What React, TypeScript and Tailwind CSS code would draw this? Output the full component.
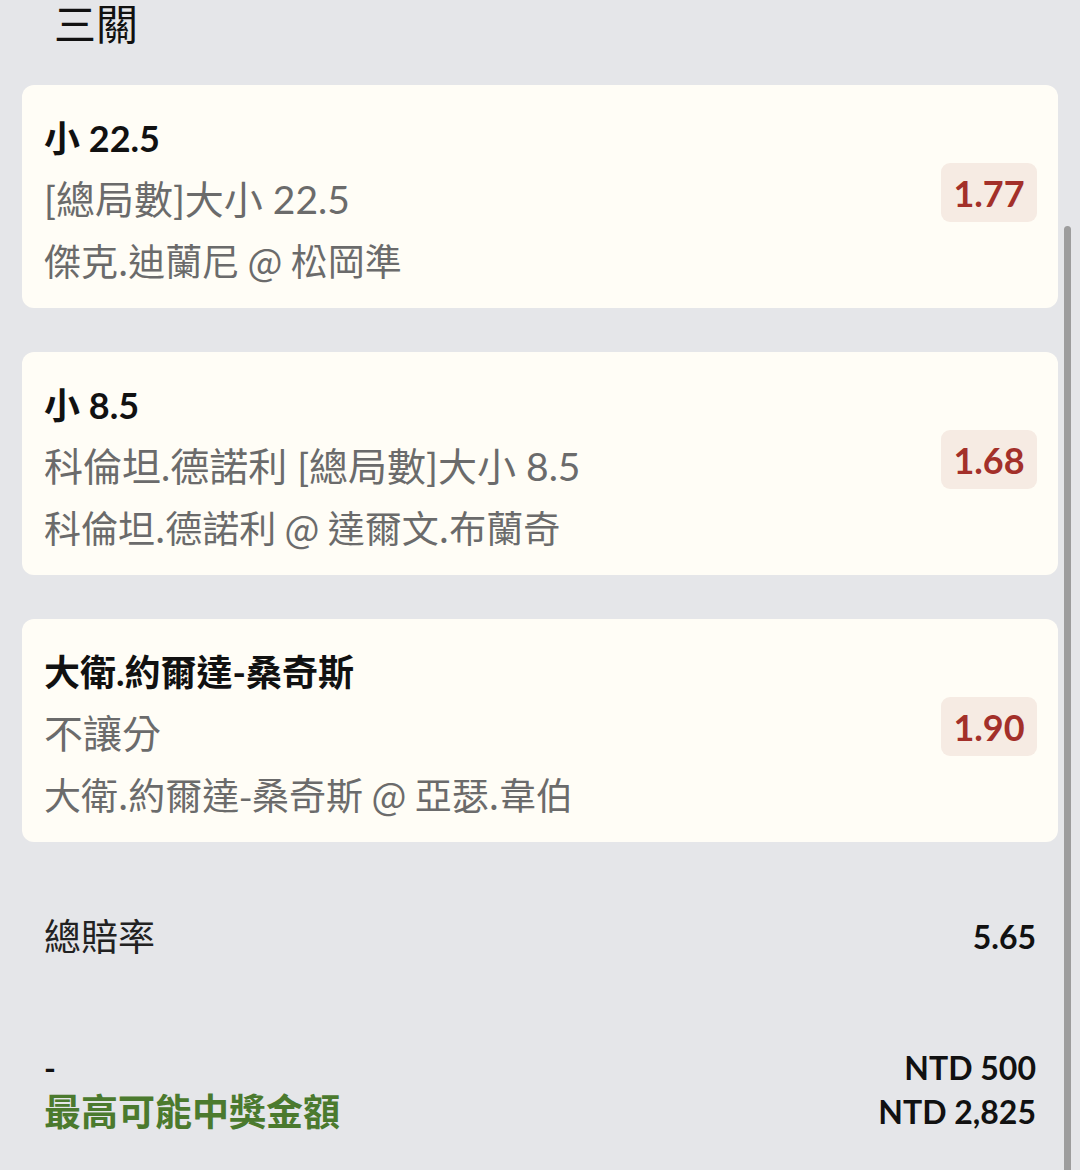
import React from "react";

const font = { fontFamily: "Lato, 'Noto Sans CJK TC', 'Noto Sans', sans-serif" };
const cjk = { fontFamily: "'Noto Sans CJK TC', 'Noto Sans', sans-serif" };

type Leg = { title: string; market: string; match: string; odds: string };

const legs: Leg[] = [
  { title: "小 22.5", market: "[總局數]大小 22.5", match: "傑克.迪蘭尼 @ 松岡準", odds: "1.77" },
  { title: "小 8.5", market: "科倫坦.德諾利 [總局數]大小 8.5", match: "科倫坦.德諾利 @ 達爾文.布蘭奇", odds: "1.68" },
  { title: "大衛.約爾達-桑奇斯", market: "不讓分", match: "大衛.約爾達-桑奇斯 @ 亞瑟.韋伯", odds: "1.90" },
];

function LegCard({ leg }: { leg: Leg }) {
  return (
    <div className="h-[223px] rounded-[12px] bg-[#fffdf6] flex items-center justify-between pl-[22px] pr-[21px]">
      <div className="flex flex-col pt-[6px]">
        <div className="text-[36px] leading-[61px] font-bold text-[#111111]">{leg.title}</div>
        <div className="text-[39px] leading-[61px] text-[#6b6b6b]">{leg.market}</div>
        <div className="text-[37px] leading-[61px] text-[#6b6b6b]" style={cjk}>{leg.match}</div>
      </div>
      <div className="mb-[8px] w-[96px] h-[59px] rounded-[9px] bg-[#f6ebe3] flex items-center justify-center text-[36px] font-bold text-[#a3302a]">
        {leg.odds}
      </div>
    </div>
  );
}

export default function App() {
  return (
    <div className="relative w-[1080px] h-[1170px] overflow-hidden bg-[#e5e6e9]" style={font}>
      <div className="px-[22px]">
        <div className="h-[85px] pl-[32px]">
          <div className="text-[42px] leading-[44px] text-[#111111]" style={cjk}>三關</div>
        </div>
        <div className="flex flex-col gap-[44px]">
          {legs.map((l) => (
            <LegCard key={l.title} leg={l} />
          ))}
        </div>
        <div className="px-[22px]">
          <div className="mt-[70px] flex items-center justify-between h-[50px]">
            <div className="text-[37px] text-[#222222]">總賠率</div>
            <div className="text-[32px] font-bold text-[#111111]">5.65</div>
          </div>
          <div className="mt-[84px] flex items-center justify-between h-[44px]">
            <div className="text-[32px] font-bold text-[#111111]">-</div>
            <div className="text-[32px] font-bold text-[#111111]">NTD 500</div>
          </div>
          <div className="flex items-center justify-between h-[44px]">
            <div className="text-[37px] font-bold text-[#4b7a2e]">最高可能中獎金額</div>
            <div className="text-[32px] font-bold text-[#111111]">NTD 2,825</div>
          </div>
        </div>
      </div>
      <div className="absolute left-[1064px] top-[226px] w-[7px] h-[960px] rounded-t-full bg-[#9d9d9d]" />
    </div>
  );
}
